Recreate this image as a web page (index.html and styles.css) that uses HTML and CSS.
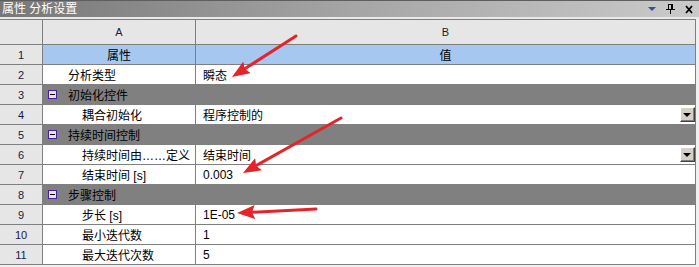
FILE: index.html
```html
<!DOCTYPE html>
<html lang="zh">
<head>
  <meta charset="UTF-8">
  <title>属性 分析设置</title>
  <link rel="stylesheet" href="styles.css">
</head>
<body>
  <div class="panel">
    <div class="titlebar">
      <span class="title">属性 分析设置</span>
      <div class="tools">
        <svg width="8" height="4" viewBox="0 0 8 4"><polygon points="0,0 8,0 4,4" fill="#3b4a9c"/></svg>
        <svg width="9" height="10" viewBox="0 0 9 10">
          <rect x="2.5" y="0.5" width="4" height="5" fill="none" stroke="#000"/>
          <rect x="5" y="1" width="1" height="4" fill="#000"/>
          <rect x="0" y="5" width="9" height="1" fill="#000"/>
          <rect x="4" y="6" width="1" height="4" fill="#000"/>
        </svg>
        <svg width="8" height="9" viewBox="0 0 8 9"><path d="M1,1 L7,8 M7,1 L1,8" stroke="#000" stroke-width="1.8"/></svg>
      </div>
    </div>
    <div class="sep"></div>

    <div class="grid">
      <div class="hd"></div><div class="hd">A</div><div class="hd">B</div>

      <div class="num">1</div><div class="cap">属性</div><div class="cap">值</div>

      <div class="num">2</div><div class="cell top">分析类型</div><div class="cell val">瞬态</div>

      <div class="num">3</div><div class="group"><span class="toggle"></span>初始化控件</div>

      <div class="num">4</div><div class="cell sub">耦合初始化</div>
      <div class="cell val">程序控制的<span class="drop"></span></div>

      <div class="num">5</div><div class="group"><span class="toggle"></span>持续时间控制</div>

      <div class="num">6</div><div class="cell sub">持续时间由……定义</div>
      <div class="cell val">结束时间<span class="drop"></span></div>

      <div class="num">7</div><div class="cell sub">结束时间 [s]</div><div class="cell val">0.003</div>

      <div class="num">8</div><div class="group"><span class="toggle"></span>步骤控制</div>

      <div class="num">9</div><div class="cell sub">步长 [s]</div><div class="cell val">1E-05</div>

      <div class="num">10</div><div class="cell sub">最小迭代数</div><div class="cell val">1</div>

      <div class="num">11</div><div class="cell sub">最大迭代次数</div><div class="cell val">5</div>
    </div>

    <!-- red annotation arrows -->
    <svg class="arrows" width="699" height="267" viewBox="0 0 699 267">
      <defs>
        <marker id="head" markerUnits="userSpaceOnUse" markerWidth="18" markerHeight="14" refX="8" refY="7" orient="auto">
          <path d="M0,0 L18,7 L0,14 L3,7 z" fill="#e5242a"/>
        </marker>
      </defs>
      <line x1="296" y1="36" x2="240.4" y2="71.6" marker-end="url(#head)"/>
      <line x1="341" y1="118" x2="251.7" y2="168.1" marker-end="url(#head)"/>
      <line x1="316" y1="209" x2="247" y2="212.5" marker-end="url(#head)"/>
    </svg>
  </div>
</body>
</html>
```

FILE: styles.css
```css
body, html {
  margin: 0;
  padding: 0;
  background-color: #f0f0f0;
  font-family: "Liberation Sans", "Noto Sans CJK SC", sans-serif;
  font-size: 12px;
  color: #000;
}

.panel {
  position: relative;
  width: 699px;
  height: 267px;
  overflow: hidden;
}

.titlebar {
  height: 17px;
  box-sizing: border-box;
  border-top: 1px solid #5e5e5e;
  background: linear-gradient(to right, #777777, #a5a5a5 50%, #cacaca);
  display: flex;
  align-items: center;
  justify-content: space-between;
  padding: 0 6px 0 2px;
}

.title {
  color: #fff;
  font-size: 12px;
  line-height: 16px;
}

.tools {
  display: flex;
  align-items: center;
  gap: 10px;
}

.tools svg {
  display: block;
}

.sep {
  height: 2px;
  background-color: #e9e9e9;
}

.grid {
  display: grid;
  grid-template-columns: 42px 152px 499px;
  grid-template-rows: 24px;
  grid-auto-rows: 19px;
  gap: 1px;
  width: 696px;
  box-sizing: border-box;
  padding: 1px 1px 1px 0;
  background-color: #7f7f7f;
}

.grid > div {
  display: flex;
  align-items: center;
  white-space: nowrap;
  overflow: hidden;
}

.hd {
  background-color: #e6e6e6;
  justify-content: center;
  font-size: 11px;
  color: #1a1a40;
}

.num {
  background-color: #e6e6e6;
  justify-content: center;
  font-size: 11px;
  color: #1a1a40;
}

.cap {
  background-color: #a6c8f0;
  justify-content: center;
}

.cell {
  background-color: #fff;
}

.top {
  padding-left: 25px;
}

.sub {
  padding-left: 39px;
}

.val {
  padding-left: 7px;
}

.group {
  grid-column: 2 / 4;
  background-color: #808080;
}

.toggle {
  position: relative;
  width: 9px;
  height: 9px;
  box-sizing: border-box;
  border: 1px solid #4a1fa0;
  background-color: #e4e4e4;
  margin: 0 11px 0 5px;
}

.toggle::after {
  content: "";
  position: absolute;
  left: 1px;
  top: 3px;
  width: 5px;
  height: 1px;
  background-color: #000;
}

.drop {
  margin-left: auto;
  width: 15px;
  height: 15px;
  box-sizing: border-box;
  border: 1px solid;
  border-color: #fff #404040 #404040 #fff;
  box-shadow: inset -1px -1px #808080;
  background-color: #d4d0c8;
  display: flex;
  align-items: center;
  justify-content: center;
}

.drop::after {
  content: "";
  border-left: 4px solid transparent;
  border-right: 4px solid transparent;
  border-top: 4px solid #000;
  margin: 1px 1px 0 0;
}

.arrows {
  position: absolute;
  top: 0;
  left: 0;
  pointer-events: none;
}

.arrows line {
  stroke: #e5242a;
  stroke-width: 3;
  stroke-linecap: round;
}
```
